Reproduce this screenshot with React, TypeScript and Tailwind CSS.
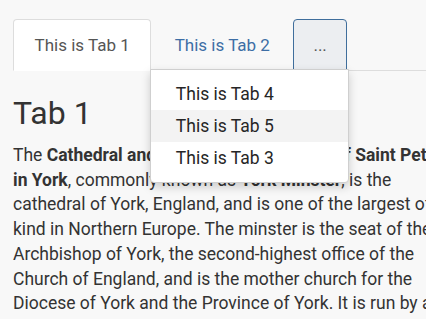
import { useState } from 'react';

const tabs = ['This is Tab 1', 'This is Tab 2'];
const more = ['This is Tab 4', 'This is Tab 5', 'This is Tab 3'];

export default function App() {
  const [active] = useState(0);

  return (
    <div className="w-[426px] h-[319px] overflow-hidden bg-[#f8f8f8] text-[#333] font-['Roboto',sans-serif] text-[17.5px]">
      <div className="pl-[13px] pt-[19px]">
        <ul className="flex border-b border-[#dddddd] w-[460px] text-[17px]">
          {tabs.map((t, i) => (
            <li key={t} className="mr-[2px] -mb-px">
              <span
                className={
                  i === active
                    ? 'block px-[20.5px] py-[13px] leading-6 bg-white border border-[#dddddd] border-b-white rounded-t text-[#555]'
                    : 'block px-[20.5px] py-[13px] leading-6 border border-transparent text-[#3d6ea5]'
                }
              >
                {t}
              </span>
            </li>
          ))}
          <li className="relative -mb-px">
            <span className="block px-[19px] py-[13px] leading-6 bg-[#eceef1] border border-[#3f6e9c] rounded-t text-[#555]">
              ...
            </span>
            <div className="absolute top-[50px] right-[-2px] w-[199px] py-[8px] bg-white border border-[#cfcfcf] rounded-b shadow-[0_4px_10px_rgba(0,0,0,0.18)] z-10 text-[17.5px]">
              {more.map((m, i) => (
                <div
                  key={m}
                  className={
                    i === 1
                      ? 'px-[25px] h-[32px] leading-[32px] bg-[#f3f3f3] text-[#262626]'
                      : 'px-[25px] h-[32px] leading-[32px] text-[#262626]'
                  }
                >
                  {m}
                </div>
              ))}
            </div>
          </li>
        </ul>
        <div className="w-[445px] pt-[24px]">
          <h3 className="text-[32px] leading-[36px] mb-[12px] text-[#333]">Tab 1</h3>
          <p className="leading-[24.7px]">
            The <b className="font-bold">Cathedral and Metropolitical Church of Saint Peter in York</b>, commonly known as{' '}
            <b className="font-bold">York Minster</b>, is the cathedral of York, England, and is one of the largest of its
            kind in Northern Europe. The minster is the seat of the Archbishop of York, the second-highest office of the
            Church of England, and is the mother church for the Diocese of York and the Province of York. It is run by a
            dean and chapter, under the Dean of York.
          </p>
        </div>
      </div>
    </div>
  );
}
